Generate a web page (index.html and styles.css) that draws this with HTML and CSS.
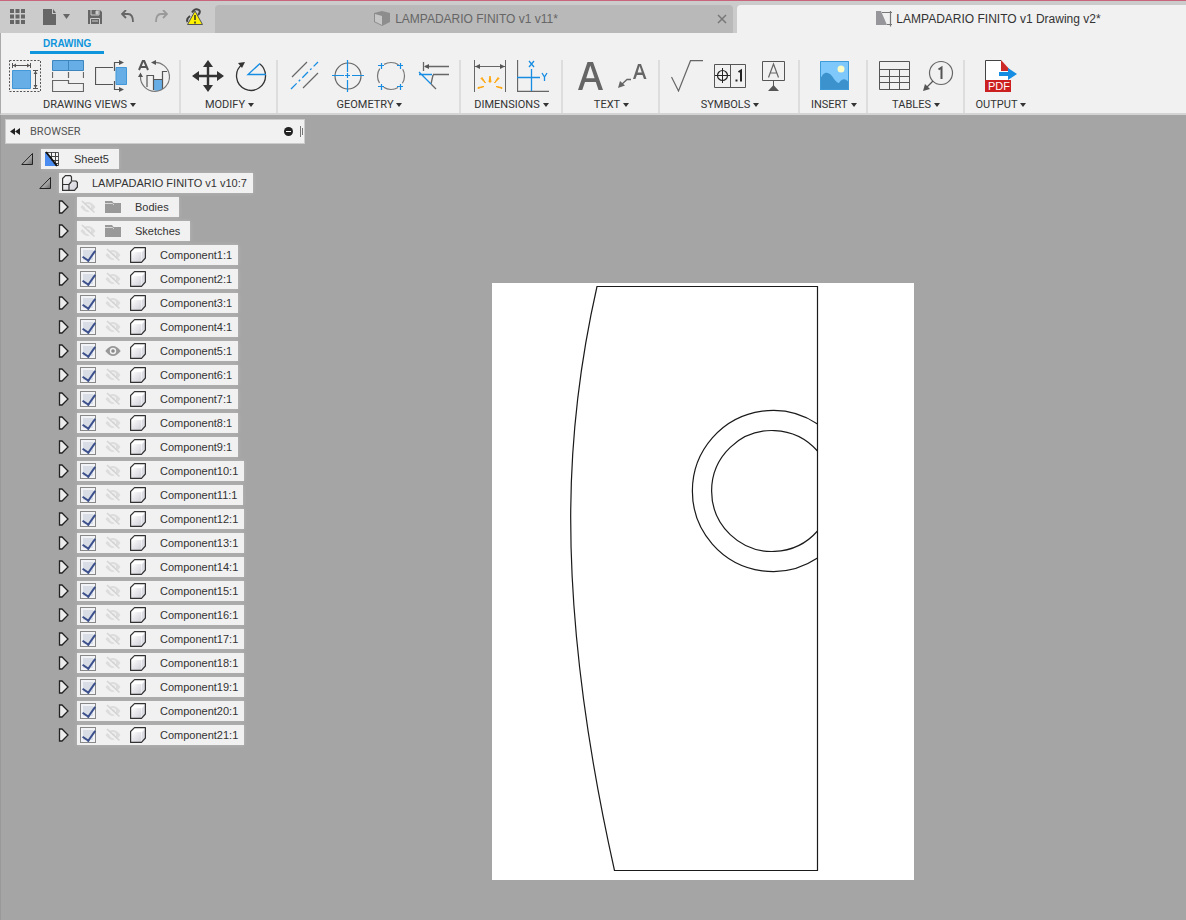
FILE: index.html
```html
<!DOCTYPE html>
<html lang="en">
<head>
<meta charset="utf-8">
<title>LAMPADARIO FINITO v1 Drawing v2*</title>
<link rel="stylesheet" href="styles.css">
</head>
<body>
<svg class="sprites" aria-hidden="true">
  <defs>
    <linearGradient id="face" x1="0" y1="0" x2="1" y2="1"><stop offset="0" stop-color="#fff"/><stop offset="1" stop-color="#cfcfd8"/></linearGradient>
    <linearGradient id="dark" x1="0" y1="0" x2="1" y2="1"><stop offset="0" stop-color="#fff"/><stop offset="1" stop-color="#666"/></linearGradient>
  </defs>
  <symbol id="closed" viewBox="0 0 12 14"><path d="M1.500 1H4L10 7L4 13H1.500Z" fill="#ececec" stroke="#222" stroke-width="1.300"/></symbol>
  <symbol id="open" viewBox="0 0 12 14"><path d="M11.500 1.500V12.500H.8Z" fill="url(#dark)" stroke="#222"/></symbol>
  <symbol id="hidden" viewBox="0 0 16 16"><path d="M.5 8Q8-2 15.500 8Q8 18 .5 8Z" fill="#dcdcdc"/><circle cx="8" cy="8" r="3" fill="#f1f1f1"/><circle cx="8" cy="8" r="1.800" fill="#dcdcdc"/><path d="M1 3.500L13 14.500" stroke="#f1f1f1" stroke-width="2"/><path d="M2 2L14.500 13.500" stroke="#d4d4d4" stroke-width="1.600"/></symbol>
  <symbol id="visible" viewBox="0 0 16 16"><path d="M.3 8Q8-2 15.700 8Q8 18 .3 8Z" fill="#989898"/><circle cx="8" cy="8" r="3.200" fill="#f1f1f1"/><circle cx="8" cy="8" r="1.800" fill="#888"/></symbol>
  <symbol id="folder" viewBox="0 0 16 16"><path d="M0 2H7L8.500 4H16V14H0Z" fill="#999"/><path d="M0 4.500H7.500L9 6" stroke="#d8d8d8" fill="none"/></symbol>
  <symbol id="cube" viewBox="0 0 16 16"><path d="M.6 4.500L4.500 .6H15.400V11L11.500 15.400H.6Z" fill="#fff"/><path d="M1 5H11.500V15H1Z" fill="url(#face)"/><path d="M12 5L15 2V11L12 14.500Z" fill="#dcdce4"/><path d="M.6 4.500L4.500 .6H15.400V11L11.500 15.400H.6Z" fill="none" stroke="#333" stroke-width="1.200" stroke-linejoin="round"/></symbol>
</svg>

<header class="titlebar">
  <nav class="quick" aria-label="Quick access">
    <button aria-label="Data panel"><svg width="15" height="15" viewBox="0 0 15 15"><path d="M2 0V15M7.500 0V15M13 0V15" stroke="#666" stroke-width="4" stroke-dasharray="4 1.500"/></svg></button>
    <button class="file" aria-label="File"><svg width="27" height="16" viewBox="0 0 27 16"><path d="M0 0H9V5H13V16H0Z M10 0L13 4H10Z" fill="#666"/><path d="M20 5H27L23.500 10Z" fill="#666"/></svg></button>
    <button class="save" aria-label="Save"><svg width="14" height="14" viewBox="0 0 14 14"><path d="M0 0H12L14 2V14H0Z" fill="#666"/><path d="M3 0V5H11V0M2.500 14V8.500H11.500V14" fill="none" stroke="#ccc"/><path d="M8 1H10V4H8ZM4 11H10" fill="#ccc" stroke="#ccc"/></svg></button>
    <button class="undo" aria-label="Undo"><svg width="13" height="13" viewBox="0 0 13 13"><path d="M5 0L1 4L5 8M1 4H7Q12 4 12 12" fill="none" stroke="#666" stroke-width="1.800"/></svg></button>
    <button class="redo" aria-label="Redo"><svg width="13" height="13" viewBox="0 0 13 13"><path d="M8 0L12 4L8 8M12 4H6Q1 4 1 12" fill="none" stroke="#999" stroke-width="1.800"/></svg></button>
    <button class="warn" aria-label="Out of date references"><svg width="18" height="18" viewBox="0 0 18 18"><path d="M1.500 14Q0 11 4 8M6 4.500Q9-.5 13 2Q15 4 12 7" fill="none" stroke="#444" stroke-width="2"/><path d="M9 3L16.500 16.500H1.500Z" fill="#fff200" stroke="#555"/><path d="M9 7V12M9 13.500V15.500" stroke="#222" stroke-width="1.400"/></svg></button>
  </nav>
  <div class="tab">
    <button class="tab-name"><svg width="17" height="16" viewBox="0 0 17 16"><path d="M0 2L8 0L16 2V11L8 15L0 11Z" fill="#8d8d8d"/><path d="M1 3L8 5V14L1 10.500Z" fill="#c6c6c6"/></svg>LAMPADARIO FINITO v1 v11*</button>
    <button class="close" aria-label="Close tab"><svg width="10" height="10" viewBox="0 0 10 10"><path d="M1 1L9 9M9 1L1 9" stroke="#777" stroke-width="1.500"/></svg></button>
  </div>
  <div class="tab active">
    <button class="tab-name"><svg width="16" height="16" viewBox="0 0 16 16"><path d="M0 0H5L11 14H0Z" fill="#97979b"/><path d="M6 1.500H16M14.500 0V15.500M11 13.500H16" fill="none" stroke="#777" stroke-width="1.200"/></svg>LAMPADARIO FINITO v1 Drawing v2*</button>
  </div>
</header>

<section class="ribbon">
  <div class="modes"><button class="mode">DRAWING</button></div>
  <div class="groups">
    <div class="group">
      <div class="tools">
        <button aria-label="Base view"><svg viewBox="0 0 32 32"><path d="M.5 .5H31.500V31.500H.5Z" fill="none" stroke="#555" stroke-dasharray="2 1.500"/><path d="M3.500 10.500H21.500V28.500H3.500Z" fill="#68aee6" stroke="#4297d6"/><path d="M3.500 3V8M21.500 3V8M4 5.500H21M24 10.500H29M24 28.500H29M26.500 11V28" stroke="#555" fill="none"/><path d="M4 5.500L7 3.500V7.500ZM21 5.500L18 3.500V7.500ZM26.500 11L24.500 14H28.500ZM26.500 28L24.500 25H28.500Z" fill="#555"/></svg></button>
        <button aria-label="Projected view"><svg viewBox="0 0 32 32"><path d="M.5 .5H31.500V10.500H.5Z" fill="#68aee6" stroke="#3d86bd"/><path d="M16.500 0V10" stroke="#3d86bd"/><path d="M.5 12V18M16.500 12V18M31.500 12V18M.5 20.500H16.500V23.500H31.500V31.500H.5Z" fill="none" stroke="#666" stroke-width="1.200"/></svg></button>
        <button aria-label="Section view"><svg viewBox="0 0 32 32"><path d="M21 7.500H31.500V24.500H21Z" fill="#68aee6" stroke="#4297d6"/><path d="M18 7.500H.5V24.500H18M19.500 11V2.500H27M19.500 21V29.500H27" fill="none" stroke="#555" stroke-width="1.200"/><path d="M24 0L29 2.500L24 5ZM24 27L29 29.500L24 32Z" fill="#555"/></svg></button>
        <button aria-label="Detail view"><svg viewBox="0 0 32 32"><path d="M1 10L5 .5H6L10 10M3 7H8" fill="none" stroke="#555" stroke-width="2"/><path d="M16 19.500H24V30Q19 32 16 30Z" fill="#68aee6"/><path d="M9 27V15.500H15.500V30M15.500 19.500H24.500V29M24.500 20V11.500H29" fill="none" stroke="#555" stroke-width="1.200"/><path d="M15 2.500A14.500 14.500 0 1 1 2.500 16" fill="none" stroke="#777" stroke-width="1.200"/><path d="M13 2.500L18 0V5ZM2.500 12.500L0 17H5Z" fill="#555"/></svg></button>
      </div>
      <button class="menu">DRAWING VIEWS</button>
    </div>
    <div class="group">
      <div class="tools">
        <button aria-label="Move"><svg viewBox="0 0 32 32"><path d="M16 4V28M4 16H28" stroke="#333" stroke-width="2.400"/><path d="M16 0L21 7H11ZM16 32L21 25H11ZM0 16L7 11V21ZM32 16L25 11V21Z" fill="#333"/></svg></button>
        <button aria-label="Rotate"><svg viewBox="0 0 32 32"><path d="M7 4.500A14.500 14.500 0 1 0 30.500 15Q30 8 25 4" fill="none" stroke="#333" stroke-width="1.300"/><path d="M3 3L10 2L7 8Z" fill="#333"/><path d="M25 3.500L13 14.500H31" fill="none" stroke="#168de2" stroke-width="1.300"/></svg></button>
      </div>
      <button class="menu">MODIFY</button>
    </div>
    <div class="group">
      <div class="tools">
        <button aria-label="Centerline"><svg viewBox="0 0 32 32"><path d="M3 17L18 2M14 28L29 13" stroke="#666" stroke-width="1.200"/><path d="M2 29L29 2" stroke="#168de2" stroke-width="1.300" stroke-dasharray="8 3 2 3"/></svg></button>
        <button aria-label="Center mark"><svg viewBox="0 0 32 32"><circle cx="16" cy="16" r="13" fill="none" stroke="#666" stroke-width="1.200"/><path d="M15.500 0V12M15.500 20V32M0 15.500H12M20 15.500H32M13 15.500H18M15.500 13V18" stroke="#168de2" stroke-width="1.200"/></svg></button>
        <button aria-label="Center mark pattern"><svg viewBox="0 0 32 32"><circle cx="16" cy="16" r="13.500" fill="none" stroke="#777" stroke-width="1.200" stroke-dasharray="15.200 6" stroke-dashoffset="7.600"/><path d="M3 5.500H9M6.500 3V9M22 5.500H28M25.500 3V9M3 26.500H9M6.500 24V30M22 26.500H28M25.500 24V30" stroke="#168de2" stroke-width="1.200"/></svg></button>
        <button aria-label="Edge extension"><svg viewBox="0 0 32 32"><path d="M5.500 2V11M7 6.500H31M15 14.500H31M15 15L13 24M13 24L18 29" fill="none" stroke="#666" stroke-width="1.300"/><path d="M6 6.500L11 4V9Z" fill="#555"/><path d="M1 14.500H14M1 12L13 24" stroke="#168de2" stroke-width="1.300"/></svg></button>
      </div>
      <button class="menu">GEOMETRY</button>
    </div>
    <div class="group roomy">
      <div class="tools">
        <button aria-label="Dimension"><svg viewBox="0 0 32 32"><path d="M.5 0V32M31.500 0V32M1 6.500H31" stroke="#666"/><path d="M1 6.500L6 4V9ZM31 6.500L26 4V9Z" fill="#555"/><path d="M15 22L16 16L17 22ZM11.500 23L7 18.500L8 17.500ZM20.500 23L25 18.500L24 17.500ZM10 26.500L4 28.500V27.500ZM22 26.500L28 28.500V27.500Z" fill="#ffa60d" stroke="#ffa60d"/></svg></button>
        <button aria-label="Ordinate dimension"><svg viewBox="0 0 32 32"><path d="M.5 0V31.500H32" fill="none" stroke="#666" stroke-width="1.300"/><path d="M14.500 9V31M0 17.500H23M12 1L17 7M17 1L12 7M25 13L27.500 17L30 13M27.500 17V21" fill="none" stroke="#168de2" stroke-width="1.300"/></svg></button>
      </div>
      <button class="menu">DIMENSIONS</button>
    </div>
    <div class="group">
      <div class="tools">
        <button aria-label="Text"><svg viewBox="0 0 32 32"><path d="M4 30L13.500 2H19L29 30H24.500L21.800 22H11L8.300 30ZM12.200 18.300H20.600L16.300 5.500Z" fill="#666"/></svg></button>
        <button aria-label="Leader"><svg viewBox="0 0 32 32"><path d="M16 19L21 4H24L29.500 19H27L25.500 15H19.900L18.400 19ZM20.600 12.500H24.800L22.600 6Z" fill="#666"/><path d="M14 19.500H10L4 25" stroke="#666" fill="none" stroke-width="1.300"/><path d="M1 28L3 21L8 25.500Z" fill="#666"/></svg></button>
      </div>
      <button class="menu">TEXT</button>
    </div>
    <div class="group">
      <div class="tools">
        <button aria-label="Surface texture"><svg viewBox="0 0 32 32"><path d="M.5 17L7.500 31L19.500 .7H32" fill="none" stroke="#666" stroke-width="1.200"/></svg></button>
        <button aria-label="Feature control frame"><svg viewBox="0 0 32 32"><path d="M.5 4.500H31.500V27.500H.5ZM16.500 4.500V27.500" fill="none" stroke="#555"/><circle cx="8.500" cy="15.500" r="5" fill="none" stroke="#222" stroke-width="1.200"/><path d="M8.500 8V23M1 15.500H16" stroke="#222"/><path d="M24.500 12L27 10.500V21.500" fill="none" stroke="#222" stroke-width="2"/><path d="M21.500 19.500H23.500V21.500H21.500Z" fill="#222"/></svg></button>
        <button aria-label="Datum identifier"><svg viewBox="0 0 32 32"><path d="M5.500 1.500H27.500V20.500H5.500Z M16.500 20.500V26" fill="none" stroke="#555"/><path d="M11.500 17.500L16.500 4L21.500 17.500M13 13H20" fill="none" stroke="#666" stroke-width="1.200"/><path d="M16.500 25L22 31H11Z" fill="#555"/></svg></button>
      </div>
      <button class="menu">SYMBOLS</button>
    </div>
    <div class="group">
      <div class="tools">
        <button aria-label="Insert image"><svg viewBox="0 0 32 32"><path d="M2 1H31V30H2Z" fill="#7ec8fb"/><path d="M2 20C5 11 11 10 16 19Q19 23 21 23C24 18 28 18 31 23V30H2Z" fill="#3b92cd"/><circle cx="23" cy="9" r="3.500" fill="#fbfbc8"/><path d="M2.500 1.500H30.500V29.500H2.500Z" fill="none" stroke="#3f9bd8"/></svg></button>
      </div>
      <button class="menu">INSERT</button>
    </div>
    <div class="group">
      <div class="tools">
        <button aria-label="Table"><svg viewBox="0 0 32 32"><path d="M.5 1.500H30.500V29.500H.5ZM.5 9.500H30.500M.5 16.500H30.500M.5 22.500H30.500M10.500 9.500V29.500M20.500 9.500V29.500" fill="none" stroke="#555"/></svg></button>
        <button aria-label="Balloon"><svg viewBox="0 0 32 32"><circle cx="19" cy="13" r="11.500" fill="none" stroke="#666" stroke-width="1.200"/><path d="M16.500 9.500L19.500 7.500V19" fill="none" stroke="#555" stroke-width="2"/><path d="M11 21L5 27" stroke="#555" stroke-width="1.300"/><path d="M1 31L3 24L8 29Z" fill="#555"/></svg></button>
      </div>
      <button class="menu">TABLES</button>
    </div>
    <div class="group last">
      <div class="tools">
        <button aria-label="Export PDF"><svg viewBox="0 0 32 32"><path d="M.5 20V.5H16L25.500 11V20Z" fill="#fff"/><path d="M.5 20V.5H16" fill="none" stroke="#444"/><path d="M16 0L26 11H16Z" fill="#cc2929"/><path d="M0 20H26V32H0Z" fill="#cc2020"/><path d="M14 12H23V8L32 14L23 20V16H14Z" fill="#168de2"/><text class="pdf" x="3" y="30">PDF</text></svg></button>
      </div>
      <button class="menu">OUTPUT</button>
    </div>
  </div>
</section>

<main class="workspace">
  <aside class="browser">
    <div class="browser-head">
      <button aria-label="Collapse panel"><svg width="10" height="7" viewBox="0 0 10 7"><path d="M5 0V7L0 3.500ZM10 0V7L5 3.500Z" fill="#222"/></svg></button>
      <h2>BROWSER</h2>
      <button aria-label="Minimise"><svg width="9" height="9" viewBox="0 0 9 9"><circle cx="4.500" cy="4.500" r="4.500" fill="#222"/><path d="M2 4.500H7" stroke="#fff"/></svg></button>
      <svg class="grip" width="4" height="11" viewBox="0 0 4 11" aria-hidden="true"><path d="M.5 0V11M2.500 2V9" stroke="#777"/></svg>
    </div>
    <ul class="tree">
      <li class="row l0"><button class="twist" aria-label="Collapse"><svg><use href="#open"/></svg></button><div class="chip"><svg class="ic sheet-icon" viewBox="0 0 16 16"><path d="M1.500 1.500H14.500V14.500H1.500Z" fill="#f4f4f4" stroke="#555"/><path d="M7.500 1V13M11.500 1V15M5 5.500H15M7 9.500H15M9 12.500H15" stroke="#444"/><path d="M1 1L12 15H1Z" fill="#4a8cf0"/><path d="M2 1L13 15" stroke="#111" stroke-width="2"/></svg><span>Sheet5</span></div></li>
      <li class="row l1"><button class="twist" aria-label="Collapse"><svg><use href="#open"/></svg></button><div class="chip tight"><svg class="ic asm" viewBox="0 0 16 16"><path d="M.6 3.500L3.500 .6H8.500L9.500 2V6H14L15.400 7.500V12L12.500 15.400H.6Z" fill="url(#face)" stroke="#333" stroke-width="1.200"/><path d="M1 9.500H7V15M7 9.500L9.500 6.500" fill="none" stroke="#333" stroke-width="1.200"/></svg><span>LAMPADARIO FINITO v1 v10:7</span></div></li>
      <li class="row"><button class="twist" aria-label="Expand"><svg><use href="#closed"/></svg></button><div class="chip"><svg class="ic"><use href="#hidden"/></svg><svg class="ic"><use href="#folder"/></svg><span>Bodies</span></div></li>
      <li class="row"><button class="twist" aria-label="Expand"><svg><use href="#closed"/></svg></button><div class="chip"><svg class="ic"><use href="#hidden"/></svg><svg class="ic"><use href="#folder"/></svg><span>Sketches</span></div></li>
      <li class="row"><button class="twist" aria-label="Expand"><svg><use href="#closed"/></svg></button><label class="chip tight"><input type="checkbox" checked><svg class="ic"><use href="#hidden"/></svg><svg class="ic"><use href="#cube"/></svg><span>Component1:1</span></label></li>
      <li class="row"><button class="twist" aria-label="Expand"><svg><use href="#closed"/></svg></button><label class="chip tight"><input type="checkbox" checked><svg class="ic"><use href="#hidden"/></svg><svg class="ic"><use href="#cube"/></svg><span>Component2:1</span></label></li>
      <li class="row"><button class="twist" aria-label="Expand"><svg><use href="#closed"/></svg></button><label class="chip tight"><input type="checkbox" checked><svg class="ic"><use href="#hidden"/></svg><svg class="ic"><use href="#cube"/></svg><span>Component3:1</span></label></li>
      <li class="row"><button class="twist" aria-label="Expand"><svg><use href="#closed"/></svg></button><label class="chip tight"><input type="checkbox" checked><svg class="ic"><use href="#hidden"/></svg><svg class="ic"><use href="#cube"/></svg><span>Component4:1</span></label></li>
      <li class="row"><button class="twist" aria-label="Expand"><svg><use href="#closed"/></svg></button><label class="chip tight"><input type="checkbox" checked><svg class="ic"><use href="#visible"/></svg><svg class="ic"><use href="#cube"/></svg><span>Component5:1</span></label></li>
      <li class="row"><button class="twist" aria-label="Expand"><svg><use href="#closed"/></svg></button><label class="chip tight"><input type="checkbox" checked><svg class="ic"><use href="#hidden"/></svg><svg class="ic"><use href="#cube"/></svg><span>Component6:1</span></label></li>
      <li class="row"><button class="twist" aria-label="Expand"><svg><use href="#closed"/></svg></button><label class="chip tight"><input type="checkbox" checked><svg class="ic"><use href="#hidden"/></svg><svg class="ic"><use href="#cube"/></svg><span>Component7:1</span></label></li>
      <li class="row"><button class="twist" aria-label="Expand"><svg><use href="#closed"/></svg></button><label class="chip tight"><input type="checkbox" checked><svg class="ic"><use href="#hidden"/></svg><svg class="ic"><use href="#cube"/></svg><span>Component8:1</span></label></li>
      <li class="row"><button class="twist" aria-label="Expand"><svg><use href="#closed"/></svg></button><label class="chip tight"><input type="checkbox" checked><svg class="ic"><use href="#hidden"/></svg><svg class="ic"><use href="#cube"/></svg><span>Component9:1</span></label></li>
      <li class="row"><button class="twist" aria-label="Expand"><svg><use href="#closed"/></svg></button><label class="chip tight"><input type="checkbox" checked><svg class="ic"><use href="#hidden"/></svg><svg class="ic"><use href="#cube"/></svg><span>Component10:1</span></label></li>
      <li class="row"><button class="twist" aria-label="Expand"><svg><use href="#closed"/></svg></button><label class="chip tight"><input type="checkbox" checked><svg class="ic"><use href="#hidden"/></svg><svg class="ic"><use href="#cube"/></svg><span>Component11:1</span></label></li>
      <li class="row"><button class="twist" aria-label="Expand"><svg><use href="#closed"/></svg></button><label class="chip tight"><input type="checkbox" checked><svg class="ic"><use href="#hidden"/></svg><svg class="ic"><use href="#cube"/></svg><span>Component12:1</span></label></li>
      <li class="row"><button class="twist" aria-label="Expand"><svg><use href="#closed"/></svg></button><label class="chip tight"><input type="checkbox" checked><svg class="ic"><use href="#hidden"/></svg><svg class="ic"><use href="#cube"/></svg><span>Component13:1</span></label></li>
      <li class="row"><button class="twist" aria-label="Expand"><svg><use href="#closed"/></svg></button><label class="chip tight"><input type="checkbox" checked><svg class="ic"><use href="#hidden"/></svg><svg class="ic"><use href="#cube"/></svg><span>Component14:1</span></label></li>
      <li class="row"><button class="twist" aria-label="Expand"><svg><use href="#closed"/></svg></button><label class="chip tight"><input type="checkbox" checked><svg class="ic"><use href="#hidden"/></svg><svg class="ic"><use href="#cube"/></svg><span>Component15:1</span></label></li>
      <li class="row"><button class="twist" aria-label="Expand"><svg><use href="#closed"/></svg></button><label class="chip tight"><input type="checkbox" checked><svg class="ic"><use href="#hidden"/></svg><svg class="ic"><use href="#cube"/></svg><span>Component16:1</span></label></li>
      <li class="row"><button class="twist" aria-label="Expand"><svg><use href="#closed"/></svg></button><label class="chip tight"><input type="checkbox" checked><svg class="ic"><use href="#hidden"/></svg><svg class="ic"><use href="#cube"/></svg><span>Component17:1</span></label></li>
      <li class="row"><button class="twist" aria-label="Expand"><svg><use href="#closed"/></svg></button><label class="chip tight"><input type="checkbox" checked><svg class="ic"><use href="#hidden"/></svg><svg class="ic"><use href="#cube"/></svg><span>Component18:1</span></label></li>
      <li class="row"><button class="twist" aria-label="Expand"><svg><use href="#closed"/></svg></button><label class="chip tight"><input type="checkbox" checked><svg class="ic"><use href="#hidden"/></svg><svg class="ic"><use href="#cube"/></svg><span>Component19:1</span></label></li>
      <li class="row"><button class="twist" aria-label="Expand"><svg><use href="#closed"/></svg></button><label class="chip tight"><input type="checkbox" checked><svg class="ic"><use href="#hidden"/></svg><svg class="ic"><use href="#cube"/></svg><span>Component20:1</span></label></li>
      <li class="row"><button class="twist" aria-label="Expand"><svg><use href="#closed"/></svg></button><label class="chip tight"><input type="checkbox" checked><svg class="ic"><use href="#hidden"/></svg><svg class="ic"><use href="#cube"/></svg><span>Component21:1</span></label></li>
    </ul>
  </aside>
  <div class="stage">
    <svg class="paper" width="422" height="597" viewBox="492 283 422 597" role="img" aria-label="Drawing sheet"><g fill="none" stroke="#1a1a1a" stroke-width="1.200"><path d="M597 286.500H817.500V870.500H614.500C588 752 570.700 630 570.700 518C570.700 444 579 366 597 286.500Z"/><path d="M817.500 424A80.500 80.500 0 1 0 817.500 558"/><path d="M817.500 451A60.500 60.500 0 1 0 817.500 531"/></g></svg>
  </div>
</main>
</body>
</html>
```

FILE: styles.css
```css
* { box-sizing: border-box; }

body {
  margin: 0;
  min-height: 100vh;
  display: flex;
  flex-direction: column;
  background: #a5a5a5;
  color: #333;
  font: 11px/16px "Liberation Sans", Arial, sans-serif;
}

button {
  display: flex;
  align-items: center;
  padding: 0;
  border: 0;
  background: none;
  color: inherit;
  font: inherit;
}

svg { display: block; flex: none; }
.sprites { position: absolute; width: 0; height: 0; }

.titlebar {
  display: flex;
  height: 33px;
  padding-top: 4px;
  gap: 4px;
  border-top: 1px solid #c9667c;
  background: #cbcbcb;
}

.quick { display: flex; align-items: center; width: 211px; padding: 0 0 5px 10px; }
.file { margin-left: 18px; }
.save { margin-left: 18px; }
.undo { margin-left: 19px; }
.redo { margin-left: 21px; }
.warn { margin-left: 18px; }

.tab {
  display: flex;
  align-items: center;
  flex: 518 1 0;
  border-radius: 4px 4px 0 0;
  background: #b9b9b9;
  color: #666;
  font-size: 12px;
}
.tab.active { flex-grow: 449; background: #f1f1f1; color: #333; border-top-right-radius: 0; }
.tab-name { flex: 1; justify-content: center; gap: 4px; }
.active .tab-name { margin-left: 54px; }
.close { margin-right: 6px; }

.ribbon {
  border-bottom: 2px solid #d4d4d4;
  border-left: 1px solid #aaa;
  background: #f1f1f1;
}
.modes { padding: 3px 0 6px 29px; }
.mode {
  padding: 0 13px;
  border-bottom: 3px solid #0f95dc;
  color: #0f95dc;
  font-weight: bold;
  font-size: 10px;
  line-height: 15px;
}
.groups { display: flex; }
.group { padding: 0 9px 0 11px; border-right: 2px solid #ddd; }
.group:first-child { padding-left: 8px; }
.group.roomy { padding: 0 12px 0 13px; }
.group.last { border: 0; }
.tools { display: flex; justify-content: center; gap: 11px; padding-bottom: 5px; }
.tools svg { width: 32px; height: 32px; }
.menu { margin: 0 auto; gap: 3px; font-family: Roboto, "Liberation Sans", sans-serif; }
.menu::after { content: ""; border: 3px solid transparent; border-top: 4px solid #333; border-bottom: 0; }
.pdf { font: 11px "Liberation Sans", Arial, sans-serif; fill: #fff; }

.workspace { flex: 1; display: flex; border-left: 1px solid #999; }
.browser { width: 304px; padding: 4px 0 0 4px; }
.browser-head {
  display: flex;
  align-items: center;
  height: 25px;
  padding: 0 0 0 4px;
  border: 1px solid #ccc;
  background: #f1f1f1;
}
.browser-head h2 {
  flex: 1;
  margin: 0 0 0 10px;
  color: #555;
  font: 11px/16px Roboto, "Liberation Sans", sans-serif;
}
.grip { margin-left: 7px; }

.tree { margin: 3px 0 0; padding: 0; list-style: none; }
.row { display: flex; align-items: center; height: 24px; padding-left: 53px; }
.l0 { padding-left: 16px; }
.l1 { padding-left: 34px; }
.twist { width: 19px; }
.l0 .twist, .l1 .twist { width: 20px; }
.twist svg { width: 12px; height: 14px; }
.chip {
  display: flex;
  align-items: center;
  gap: 9px;
  height: 20px;
  padding: 0 10px 0 3px;
  background: #f1f1f1;
  box-shadow: 0 0 4px #b8b8b8;
}
.chip.tight { padding-right: 6px; }
.chip span { margin-left: 5px; }
.ic { width: 16px; height: 16px; }
.chip input {
  appearance: none;
  width: 16px;
  height: 16px;
  margin: 0;
  border: 1px solid #888;
  background: #d9dee6;
  box-shadow: inset 0 0 0 2px #f1f3f6;
}
.chip input:checked::before {
  content: "";
  display: block;
  width: 6px;
  height: 11px;
  margin: 0 0 0 4px;
  border: solid #3b4f8c;
  border-width: 0 2px 2px 0;
  transform: rotate(35deg);
}

.stage { flex: 1; padding: 168px 0 0 187px; }
.paper { background: #fff; }
```
